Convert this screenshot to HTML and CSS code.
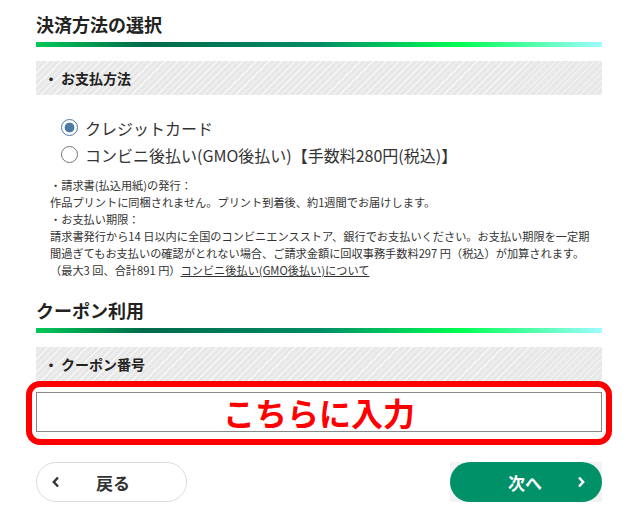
FILE: index.html
```html
<!DOCTYPE html>
<html lang="ja">
<head>
    <meta charset="UTF-8">
    <title>決済方法の選択</title>
    <link rel="stylesheet" href="styles.css">
</head>
<body>
<div class="page">
    <!-- 決済方法 -->
    <h2 class="sec-title">決済方法の選択</h2>
    <div class="sec-bar"></div>
    <div class="sub-title"><span class="dot">・</span>お支払方法</div>

    <ul class="pay-list">
        <li><span class="radio checked"></span>クレジットカード</li>
        <li><span class="radio"></span>コンビニ後払い(GMO後払い)【手数料280円(税込)】</li>
    </ul>

    <div class="notes">
        <p>・請求書(払込用紙)の発行：</p>
        <p>作品プリントに同梱されません。プリント到着後、約1週間でお届けします。</p>
        <p>・お支払い期限：</p>
        <p>請求書発行から14 日以内に全国のコンビニエンスストア、銀行でお支払いください。お支払い期限を一定期<br>間過ぎてもお支払いの確認がとれない場合、ご請求金額に回収事務手数料297 円（税込）が加算されます。<br>（最大3 回、合計891 円）<a href="#">コンビニ後払い(GMO後払い)について</a></p>
    </div>

    <!-- クーポン -->
    <h2 class="sec-title sec-title2">クーポン利用</h2>
    <div class="sec-bar"></div>
    <div class="sub-title"><span class="dot">・</span>クーポン番号</div>

    <div class="highlight">
        <div class="coupon-input">こちらに入力</div>
    </div>

    <div class="btn-row">
        <a class="btn btn-back" href="#">
            <svg class="chev" width="8" height="12" viewBox="0 0 8 12"><polyline points="6,1.5 1.8,6 6,10.5" fill="none" stroke="#333" stroke-width="2.4"/></svg>
            <span class="btn-text">戻る</span>
        </a>
        <span class="next-wrap">
            <a class="btn btn-next" href="#">
                <span class="btn-text">次へ</span>
                <svg class="chev" width="8" height="12" viewBox="0 0 8 12"><polyline points="2,1.5 6.2,6 2,10.5" fill="none" stroke="#fff" stroke-width="2.4"/></svg>
            </a>
        </span>
    </div>
</div>
</body>
</html>
```

FILE: styles.css
```css
*{
    margin: 0;
    padding: 0;
    box-sizing: border-box;
}
body{
    font-family: "Noto Sans CJK JP", "Noto Sans", sans-serif;
    color: #333;
    background: #fff;
}
.page{
    padding: 11px 36px 0;
}

/* 見出し */
.sec-title{
    font-size: 18px;
    line-height: 26px;
    font-weight: 700;
    color: #222;
}
.sec-title2{
    margin-top: 18px;
}
.sec-bar{
    height: 5px;
    margin-top: 5px;
    background: linear-gradient(to right, #00c957 0%, #006a4a 19%, #008c66 50%, #00ff52 75%, #9ffcff 100%);
}
.sub-title{
    margin-top: 14px;
    height: 34px;
    line-height: 34px;
    padding-left: 8px;
    font-size: 14px;
    font-weight: 700;
    color: #222;
    background: repeating-linear-gradient(135deg, #e8e8e8 0 3.6px, #f7f7f7 3.6px 4.6px);
}
.sub-title .dot{
    margin-right: 3px;
}

/* 支払方法 */
.pay-list{
    list-style: none;
    margin-top: 19px;
    padding-left: 25px;
}
.pay-list li{
    display: flex;
    align-items: center;
    gap: 7px;
    height: 27px;
    font-size: 16px;
    color: #333;
}
.radio{
    flex: none;
    width: 17px;
    height: 17px;
    border-radius: 50%;
    border: 1.5px solid #767676;
    background: #fff;
}
.radio.checked{
    border-color: #4b7aa5;
    background: radial-gradient(circle, #4b7aa5 0 4.6px, #fff 5.2px);
}

.notes{
    margin-top: 9px;
    padding-left: 14px;
    font-size: 11.2px;
    line-height: 17px;
    color: #333;
}
.notes a{
    color: #333;
    text-decoration: underline;
}

/* クーポン入力 */
.highlight{
    margin: 0 -10px;
    padding: 5px 4px 7px;
    border: 6px solid #ff0000;
    border-radius: 14px;
}
.coupon-input{
    height: 40px;
    border: 1px solid #888;
    background: #fff;
    text-align: center;
    font-size: 32px;
    line-height: 38px;
    font-weight: 700;
    color: #ff0000;
}

/* ボタン */
.btn-row{
    display: flex;
    justify-content: space-between;
    margin-top: 17px;
}
.btn{
    display: flex;
    align-items: center;
    height: 40px;
    width: 151px;
    border-radius: 20px;
    font-size: 17px;
    font-weight: 700;
    text-decoration: none;
}
.btn-back{
    border: 1px solid #dcdcdc;
    background: #fff;
    color: #333;
    padding-left: 15px;
}
.btn-back .btn-text{
    margin-left: 36px;
}
.next-wrap{
    background: #f3f3f3;
}
.btn-next{
    width: 152px;
    background: #009169;
    color: #fff;
    padding: 0 17px 0 58px;
}
.btn-next .chev{
    margin-left: auto;
}
```
